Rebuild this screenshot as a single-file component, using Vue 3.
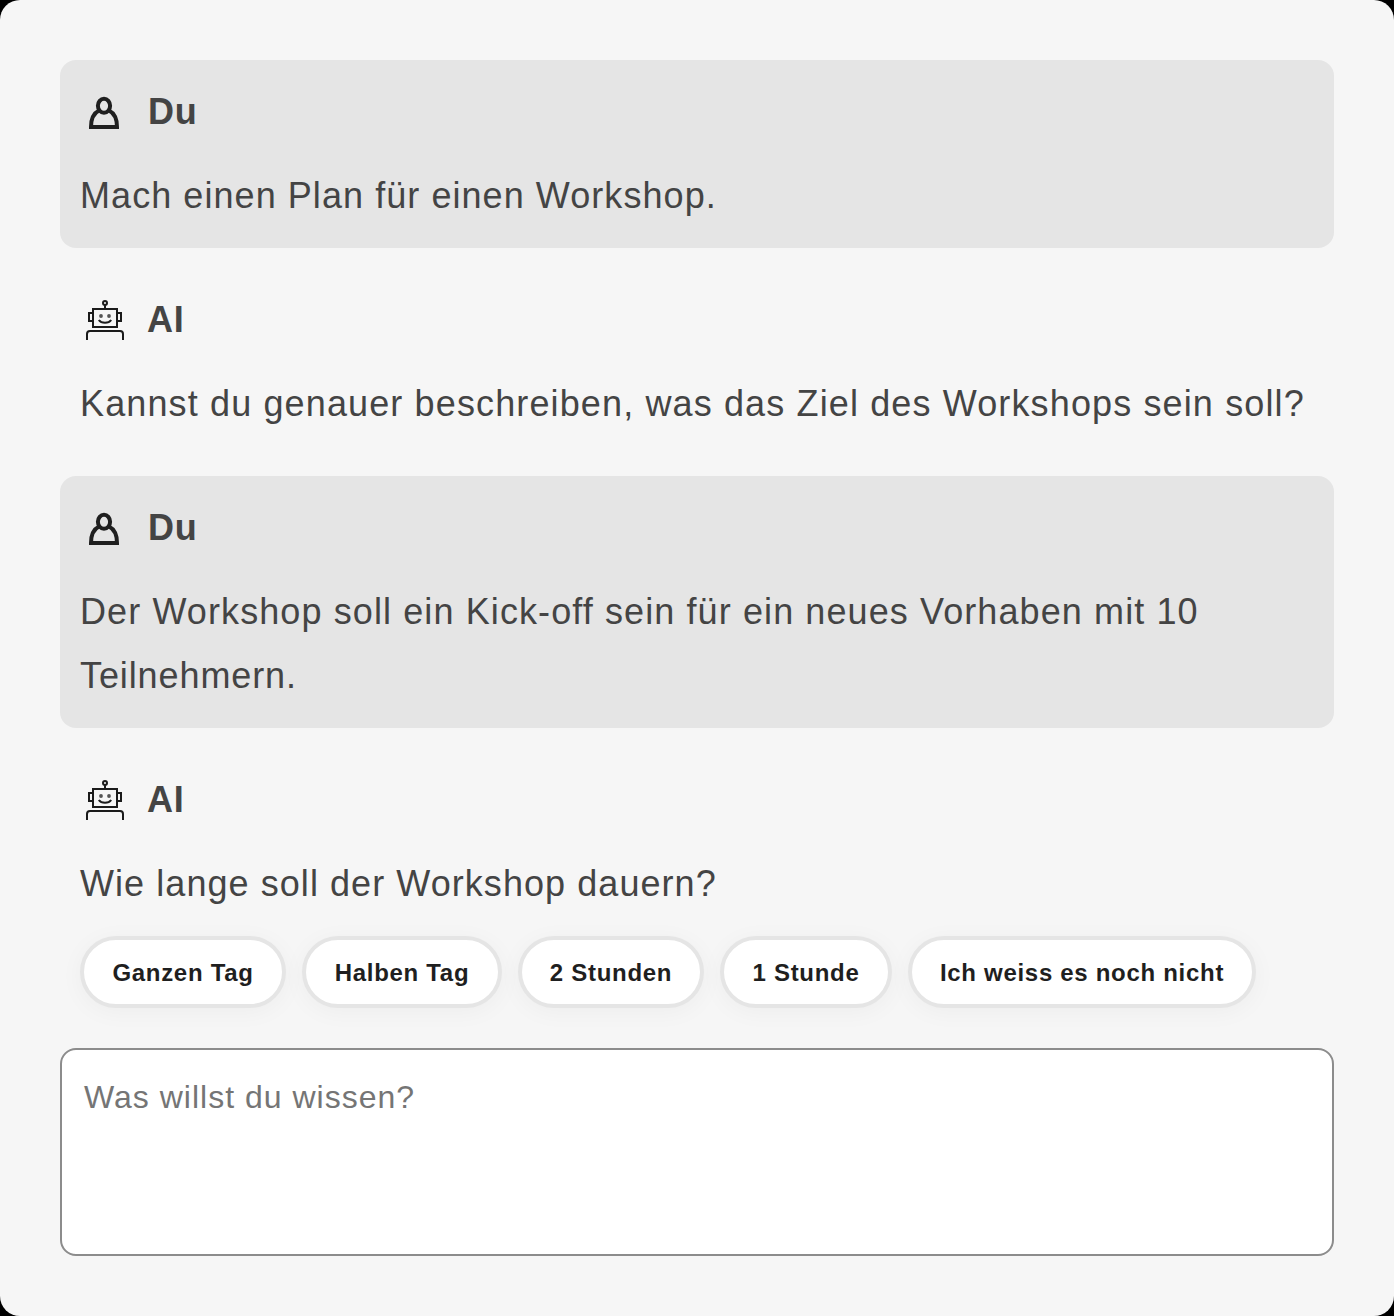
<script setup>
const messages = [
  { who: 'Du', user: true, lines: [{ text: 'Mach einen Plan für einen Workshop.', tracking: 1.06 }] },
  { who: 'AI', user: false, lines: [{ text: 'Kannst du genauer beschreiben, was das Ziel des Workshops sein soll?', tracking: 1.13 }] },
  {
    who: 'Du',
    user: true,
    lines: [
      { text: 'Der Workshop soll ein Kick-off sein für ein neues Vorhaben mit 10', tracking: 1.1 },
      { text: 'Teilnehmern.', tracking: 0.9 },
    ],
  },
  {
    who: 'AI',
    user: false,
    lines: [{ text: 'Wie lange soll der Workshop dauern?', tracking: 1.06 }],
    replies: [
      { label: 'Ganzen Tag', width: 206 },
      { label: 'Halben Tag', width: 200 },
      { label: '2 Stunden', width: 186 },
      { label: '1 Stunde', width: 172 },
      { label: 'Ich weiss es noch nicht', width: 348 },
    ],
  },
]
</script>

<template>
  <div class="page">
    <main class="chat">
      <section v-for="(m, i) in messages" :key="i" class="message" :class="{ user: m.user }">
        <header class="head">
          <svg v-if="m.user" class="icon" viewBox="0 0 48 48" fill="none" stroke="#1f1f1f" stroke-width="4">
            <ellipse cx="24" cy="17.800" rx="6.100" ry="7" />
            <path d="M19 22.500C14 25 11 31 11 39H37C37 31 34 25 29 22.500" />
          </svg>
          <svg v-else class="icon" viewBox="0 0 48 48" fill="none" stroke="#1b1b1b" stroke-width="2">
            <circle cx="25" cy="7" r="2" />
            <path d="M25 9V13M13 13H37V31H13ZM13 17H9V25H13M37 17H41V25H37M7 44V38Q7 35 10 35H40Q43 35 43 38V44" />
            <path d="M18.800 24C21.500 27.700 28.500 27.700 31.200 24" />
            <g fill="#555" stroke="none"><circle cx="21" cy="20" r="1.900" /><circle cx="29" cy="20" r="1.900" /></g>
          </svg>
          <h2>{{ m.who }}</h2>
        </header>
        <p>
          <span v-for="line in m.lines" :key="line.text" class="line" :style="{ letterSpacing: line.tracking + 'px' }">{{ line.text }}</span>
        </p>
        <div v-if="m.replies" class="replies">
          <button v-for="r in m.replies" :key="r.label" :style="{ width: r.width + 'px' }">{{ r.label }}</button>
        </div>
      </section>
      <textarea placeholder="Was willst du wissen?"></textarea>
    </main>
  </div>
</template>

<style>
body { background: #000; }
</style>
<style scoped>
.page { box-sizing: border-box; height: 1316px; padding: 60px; background: #f6f6f6; border-radius: 20px; font-family: "Liberation Sans", Arial, sans-serif; color: #444; }
.message { padding: 20px; margin-bottom: 20px; border-radius: 16px; }
.message.user { background: #e5e5e5; }
.head { display: flex; align-items: center; height: 64px; gap: 20px; }
.icon { width: 48px; height: 48px; }
h2 { margin: 0; font-size: 36px; letter-spacing: 0.8px; }
.message:not(.user) h2 { margin-left: -1px; }
p { margin: 20px 0 0; font-size: 36px; line-height: 64px; white-space: nowrap; }
.line { display: block; }
.replies { display: flex; gap: 16px; margin-top: 20px; }
button { box-sizing: border-box; height: 72px; padding: 2px 0 0; border: 4px solid #e5e5e5; border-radius: 36px; background: #fff; box-shadow: 0 4px 24px rgba(0, 0, 0, 0.04); font: bold 24px "Liberation Sans", Arial, sans-serif; letter-spacing: 0.7px; white-space: nowrap; color: #1f1f1f; }
textarea { display: block; box-sizing: border-box; width: 100%; height: 208px; border: 2px solid #8c8c8c; border-radius: 16px; padding: 29px 22px 22px; resize: none; font: 32px "Liberation Sans", Arial, sans-serif; letter-spacing: 1px; }
textarea::placeholder { color: #757575; }
</style>
